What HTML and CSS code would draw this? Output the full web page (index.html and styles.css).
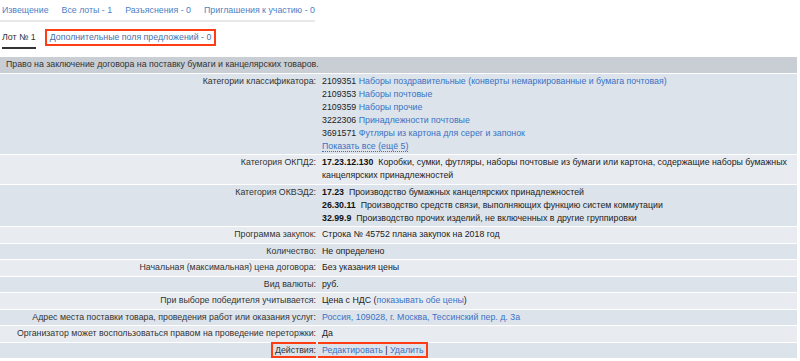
FILE: index.html
```html
<!DOCTYPE html>
<html>
<head>
  <title>Лот № 1</title>
  <link rel="stylesheet" href="styles.css">
</head>
<body>
  <div class="tabs tabs-main">
    <a href="#">Извещение</a>
    <a href="#">Все лоты - 1</a>
    <a href="#">Разъяснения - 0</a>
    <a href="#">Приглашения к участию - 0</a>
  </div>

  <div class="tabs tabs-lot">
    <span class="tab-active">Лот № 1</span>
    <a href="#" class="marked">Дополнительные поля предложений - 0</a>
  </div>

  <table class="lot-table">
    <tr class="head">
      <td colspan="2">Право на заключение договора на поставку бумаги и канцелярских товаров.</td>
    </tr>
    <tr>
      <th>Категории классификатора:</th>
      <td>
        2109351 <a href="#">Наборы поздравительные (конверты немаркированные и бумага почтовая)</a><br>
        2109353 <a href="#">Наборы почтовые</a><br>
        2109359 <a href="#">Наборы прочие</a><br>
        3222306 <a href="#">Принадлежности почтовые</a><br>
        3691571 <a href="#">Футляры из картона для серег и запонок</a><br>
        <a href="#" class="dotted">Показать все (ещё 5)</a>
      </td>
    </tr>
    <tr>
      <th>Категория ОКПД2:</th>
      <td><b>17.23.12.130</b>&nbsp; Коробки, сумки, футляры, наборы почтовые из бумаги или картона, содержащие наборы бумажных канцелярских принадлежностей</td>
    </tr>
    <tr>
      <th>Категория ОКВЭД2:</th>
      <td>
        <b>17.23</b>&nbsp; Производство бумажных канцелярских принадлежностей<br>
        <b>26.30.11</b>&nbsp; Производство средств связи, выполняющих функцию систем коммутации<br>
        <b>32.99.9</b>&nbsp; Производство прочих изделий, не включенных в другие группировки
      </td>
    </tr>
    <tr>
      <th>Программа закупок:</th>
      <td>Строка № 45752 плана закупок на 2018 год</td>
    </tr>
    <tr>
      <th>Количество:</th>
      <td>Не определено</td>
    </tr>
    <tr>
      <th>Начальная (максимальная) цена договора:</th>
      <td>Без указания цены</td>
    </tr>
    <tr>
      <th>Вид валюты:</th>
      <td>руб.</td>
    </tr>
    <tr>
      <th>При выборе победителя учитывается:</th>
      <td>Цена с НДС (<a href="#">показывать обе цены</a>)</td>
    </tr>
    <tr>
      <th>Адрес места поставки товара, проведения работ или оказания услуг:</th>
      <td><a href="#">Россия, 109028, г. Москва, Тессинский пер. д. 3а</a></td>
    </tr>
    <tr>
      <th>Организатор может воспользоваться правом на проведение переторжки:</th>
      <td>Да</td>
    </tr>
    <tr>
      <th><span class="marked-start">Действия:</span></th>
      <td><span class="marked-end"><a href="#">Редактировать</a> | <a href="#">Удалить</a></span></td>
    </tr>
  </table>
</body>
</html>
```

FILE: styles.css
```css
body {
  margin: 0;
  font-family: "Liberation Sans", Arial, sans-serif;
  font-size: 8.8px;
  line-height: 13px;
  color: #333333;
  background-color: #ffffff;
}

a {
  color: #3a72c4;
  text-decoration: none;
}

/* Вкладки */
.tabs {
  display: flex;
  align-items: flex-end;
  white-space: nowrap;
}

.tabs-main {
  gap: 13px;
  width: fit-content;
  padding: 4px 0 3px 2px;
  border-bottom: 2px solid #e8e8e8;
}

.tabs-main a {
  color: #4a7fc6;
}

.tabs-lot {
  gap: 9px;
  margin-top: 7px;
  padding-left: 2px;
}

.tab-active {
  padding-bottom: 3px;
  border-bottom: 2px solid #333333;
}

.marked {
  padding: 0 3px;
  margin-bottom: 3px;
  border: 2px solid #ff3d12;
  color: #4a6fa8;
}

/* Таблица лота */
.lot-table {
  width: 797px;
  margin-top: 7px;
  border-collapse: separate;
  border-spacing: 0 1px;
}

.lot-table td,
.lot-table th {
  padding: 1.25px 4px;
  vertical-align: top;
  text-align: left;
  font-weight: normal;
}

.lot-table th {
  width: 312px;
  text-align: right;
  white-space: nowrap;
  padding-right: 2px;
}

.lot-table td {
  color: #222222;
}

.lot-table tr.head td {
  background-color: #c9cdd4;
  color: #333333;
  padding-left: 6px;
}

.lot-table tr:nth-child(even) th,
.lot-table tr:nth-child(even) td {
  background-color: #dce3eb;
}

.lot-table tr:nth-child(odd):not(.head) th,
.lot-table tr:nth-child(odd):not(.head) td {
  background-color: #e8ecf1;
}

.lot-table b {
  color: #111111;
}

.dotted {
  border-bottom: 1px dotted #3a72c4;
}

/* Красная рамка вокруг действий */
.marked-start {
  padding: 1px 0 1px 2px;
  border: 2px solid #ff3d12;
  border-right: none;
}

.marked-end {
  margin-left: -4px;
  padding: 1px 2px 1px 4px;
  border: 2px solid #ff3d12;
  border-left: none;
}
```
